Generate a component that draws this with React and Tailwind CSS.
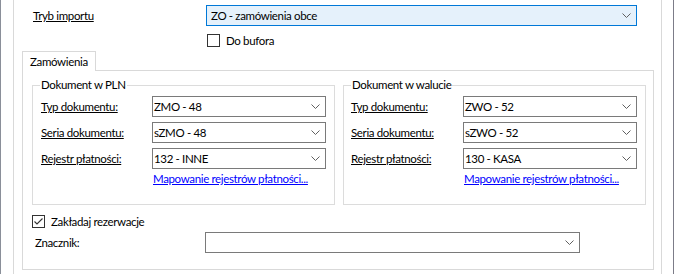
import React from "react";

const Chevron = () => (
  <svg width="9" height="5" viewBox="0 0 9 5" className="shrink-0">
    <polyline points="0.5,0.5 4.5,4.5 8.5,0.5" fill="none" stroke="#606060" strokeWidth="1" />
  </svg>
);

function Combo({ value, className = "", blue = false }) {
  return (
    <div
      className={`flex h-[21px] shrink-0 items-center justify-between border pr-[5px] ${
        blue ? "border-[#0078d7] bg-[#e5f1fb] pl-[4px]" : "border-[#7a7a7a] bg-white pl-[1px]"
      } ${className}`}
    >
      <span className="leading-[15px] whitespace-nowrap">{value}</span>
      <Chevron />
    </div>
  );
}

function CheckBox({ checked = false }) {
  return (
    <div className="flex h-[13px] w-[13px] shrink-0 items-center justify-center border border-[#333333] bg-white">
      {checked && (
        <svg width="11" height="11" viewBox="0 0 11 11">
          <polyline points="1.5,5.5 4,8 9.5,2.5" fill="none" stroke="#333333" strokeWidth="1.1" />
        </svg>
      )}
    </div>
  );
}

function Row({ label, value, labelW }) {
  return (
    <div className="flex h-[21px] items-center">
      <span className={`${labelW} underline underline-offset-1 leading-[15px] whitespace-nowrap`}>{label}</span>
      <Combo value={value} className="w-[174px]" />
    </div>
  );
}

function Group({ title, rows, pl, labelW, linkPl }) {
  return (
    <div className={`relative h-[120px] w-[303px] shrink-0 border border-[#dcdcdc] ${pl} pt-[10px]`}>
      <span className="absolute left-[7px] top-[-9px] bg-white px-px leading-[15px] whitespace-nowrap">{title}</span>
      <div className="flex flex-col gap-[5px]">
        {rows.map((r) => (
          <Row key={r[0]} label={r[0]} value={r[1]} labelW={labelW} />
        ))}
      </div>
      <div className={`mt-[2px] ${linkPl} leading-[15px]`}>
        <span className="text-[#0000ff] underline underline-offset-1 whitespace-nowrap">Mapowanie rejestrów płatności...</span>
      </div>
    </div>
  );
}

export default function App() {
  return (
    <div className="flex h-[274px] w-[674px] overflow-hidden bg-white font-['Lato',sans-serif] text-[11.5px] tracking-[-0.35px] text-black">
      <div className="w-px bg-[#8a8f99]" />
      <div className="w-[12px]" />
      <div className="w-px bg-[#d9d9d9]" />
      <div className="flex w-[647px] flex-col">
        <div className="mt-[5px] flex h-[21px] items-center">
          <span className="ml-[19px] w-[173px] underline underline-offset-1 leading-[15px]">Tryb importu</span>
          <Combo value="ZO - zamówienia obce" blue className="w-[431px]" />
        </div>
        <div className="ml-[193px] mt-[8px] flex h-[13px] items-center gap-[6px]">
          <CheckBox />
          <span className="leading-[15px]">Do bufora</span>
        </div>
        <div className="ml-[8px] mt-[4px] flex flex-col">
          <div className="relative z-10 -mb-px flex h-[20px] w-[74px] items-center border-l border-r border-t border-[#d9d9d9] bg-white pl-[7px]">
            <span className="leading-[15px]">Zamówienia</span>
          </div>
          <div className="flex h-[200px] w-[632px] flex-col border border-[#d9d9d9] pl-[9px] pt-[14px]">
            <div className="flex gap-[8px]">
              <Group
                title="Dokument w PLN"
                pl="pl-[8px]"
                labelW="w-[111px]"
                linkPl="pl-[112px]"
                rows={[
                  ["Typ dokumentu:", "ZMO - 48"],
                  ["Seria dokumentu:", "sZMO - 48"],
                  ["Rejestr płatności:", "132 - INNE"],
                ]}
              />
              <Group
                title="Dokument w walucie"
                pl="pl-[7px]"
                labelW="w-[112px]"
                linkPl="pl-[113px]"
                rows={[
                  ["Typ dokumentu:", "ZWO - 52"],
                  ["Seria dokumentu:", "sZWO - 52"],
                  ["Rejestr płatności:", "130 - KASA"],
                ]}
              />
            </div>
            <div className="mt-[10px] flex h-[13px] items-center gap-[6px]">
              <CheckBox checked />
              <span className="leading-[15px]">Zakładaj rezerwacje</span>
            </div>
            <div className="mt-[4px] flex h-[21px] items-center">
              <span className="ml-[3px] w-[170px] leading-[15px]">Znacznik:</span>
              <Combo value="" className="w-[375px]" />
            </div>
          </div>
        </div>
      </div>
      <div className="w-px bg-[#d9d9d9]" />
      <div className="w-[11px]" />
      <div className="w-px bg-[#7c7c88]" />
    </div>
  );
}
